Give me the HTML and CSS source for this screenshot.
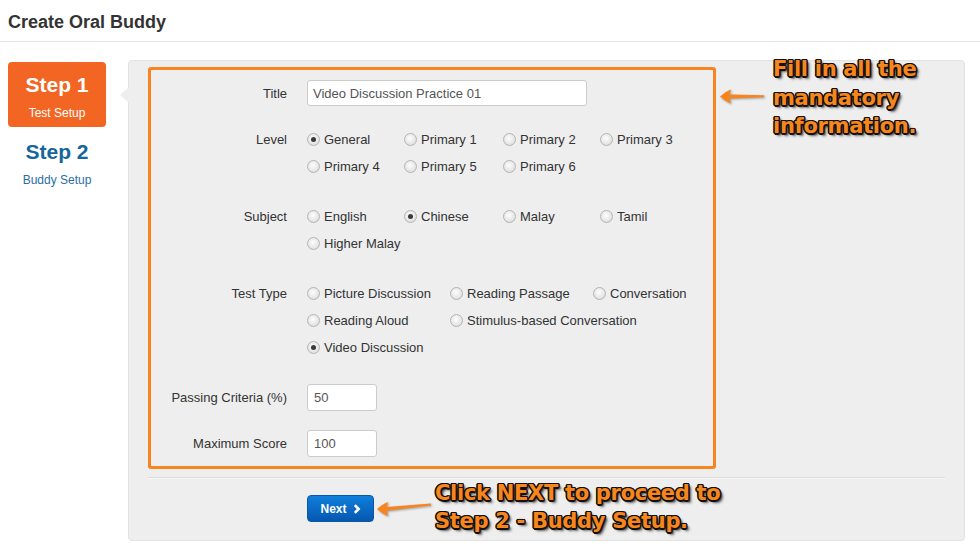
FILE: index.html
```html
<!DOCTYPE html>
<html>
<head>
<meta charset="utf-8">
<link rel="stylesheet" href="styles.css">
</head>
<body>
<div class="header"><h1 class="page-title">Create Oral Buddy</h1></div>
<div class="main">
  <div class="steps">
    <div class="step active"><div class="step-num">Step 1</div><div class="step-name">Test Setup</div></div>
    <div class="step"><div class="step-num">Step 2</div><div class="step-name">Buddy Setup</div></div>
  </div>
  <div class="panel">
    <div class="highlight">
      <div class="row row-title">
        <div class="label">Title</div>
        <div class="input wide">Video Discussion Practice 01</div>
      </div>
      <div class="row group g-level">
        <div class="label lbl-line">Level</div>
        <div class="options cols4">
          <div class="opt"><span class="radio checked"></span>General</div>
          <div class="opt"><span class="radio"></span>Primary 1</div>
          <div class="opt"><span class="radio"></span>Primary 2</div>
          <div class="opt"><span class="radio"></span>Primary 3</div>
          <div class="opt"><span class="radio"></span>Primary 4</div>
          <div class="opt"><span class="radio"></span>Primary 5</div>
          <div class="opt"><span class="radio"></span>Primary 6</div>
        </div>
      </div>
      <div class="row group g-subject">
        <div class="label lbl-line">Subject</div>
        <div class="options cols4">
          <div class="opt"><span class="radio"></span>English</div>
          <div class="opt"><span class="radio checked"></span>Chinese</div>
          <div class="opt"><span class="radio"></span>Malay</div>
          <div class="opt"><span class="radio"></span>Tamil</div>
          <div class="opt"><span class="radio"></span>Higher Malay</div>
        </div>
      </div>
      <div class="row group g-type">
        <div class="label lbl-line">Test Type</div>
        <div class="options cols3">
          <div class="opt"><span class="radio"></span>Picture Discussion</div>
          <div class="opt"><span class="radio"></span>Reading Passage</div>
          <div class="opt"><span class="radio"></span>Conversation</div>
          <div class="opt"><span class="radio"></span>Reading Aloud</div>
          <div class="opt span2"><span class="radio"></span>Stimulus-based Conversation</div>
          <div class="opt"><span class="radio checked"></span>Video Discussion</div>
        </div>
      </div>
      <div class="row row-pass">
        <div class="label">Passing Criteria (%)</div>
        <div class="input small">50</div>
      </div>
      <div class="row row-max">
        <div class="label">Maximum Score</div>
        <div class="input small">100</div>
      </div>
    </div>
    <div class="actions">
      <div class="btn">Next <svg class="chev" width="8" height="10" viewBox="0 0 8 10"><path d="M1.8 1.2 L5.6 5 L1.8 8.8" fill="none" stroke="#fff" stroke-width="2.6"/></svg></div>
    </div>
  </div>
</div>

<div class="note note-fill">Fill in all the<br>mandatory<br>information.</div>
<div class="note note-next">Click NEXT to proceed to<br>Step 2 - Buddy Setup.</div>

<svg class="arrow arrow-1" width="50" height="20" viewBox="0 0 50 20">
  <path d="M2 9.5 C6 6 9 4 13 2.5 L11.5 7.6 L46 8.2 L46 10.2 L11.5 11.6 L13 16.5 C9 15 6 13 2 9.5 Z" fill="#f7841f"/>
</svg>
<svg class="arrow arrow-2" width="60" height="22" viewBox="0 0 60 22">
  <path d="M2 12 C6 8.5 9 6.5 13 5 L11.8 10 L56 6.6 L56 8.6 L11.8 13.8 L13 19 C9 17.5 6 15.5 2 12 Z" fill="#f7841f"/>
</svg>
</body>
</html>
```

FILE: styles.css
```css
html, body {
  margin: 0;
  padding: 0;
  background: #fff;
}
body {
  font-family: "Liberation Sans", Arial, sans-serif;
  color: #333;
  width: 980px;
  height: 557px;
  overflow: hidden;
  position: relative;
}
.header {
  height: 42px;
  box-sizing: border-box;
  border-bottom: 1px solid #e6e6e6;
  padding: 3px 8px 0;
  display: flex;
  align-items: center;
}
.page-title {
  margin: 0;
  font-size: 18px;
  font-weight: bold;
  color: #333;
}
.main {
  display: flex;
  gap: 22px;
  padding: 18px 15px 0 8px;
}
.steps {
  width: 98px;
  margin-top: 2px;
  display: flex;
  flex-direction: column;
  gap: 9px;
}
.step {
  text-align: center;
  color: #17659b;
}
.step.active {
  background: #f26522;
  color: #fff;
  border-radius: 4px;
  height: 65px;
  box-sizing: border-box;
  padding-top: 10px;
}
.step-num {
  font-size: 21px;
  font-weight: bold;
  line-height: 26px;
}
.step-name {
  font-size: 12px;
  line-height: 16px;
  margin-top: 7px;
}
.step:not(.active) .step-num { line-height: 30px; margin-top: 1px; }
.step:not(.active) .step-name { color: #2b6ea3; margin-top: 5px; }

.panel {
  flex: 1;
  position: relative;
  background: #eeeeee;
  border: 1px solid #e2e2e2;
  border-radius: 4px;
  padding: 6px 19px 0;
}
.panel::before {
  content: "";
  position: absolute;
  left: -9px;
  top: 26px;
  width: 0;
  height: 0;
  border-top: 8px solid transparent;
  border-bottom: 8px solid transparent;
  border-right: 9px solid #eeeeee;
}
.highlight {
  width: 568px;
  box-sizing: border-box;
  border: 3px solid #f7841f;
  border-radius: 3px;
  padding: 10px 0 9px;
}
.row {
  display: flex;
  align-items: center;
  font-size: 13px;
}
.group { align-items: flex-start; }
.label {
  width: 136px;
  margin-right: 20px;
  text-align: right;
  color: #333;
  flex: none;
}
.lbl-line { line-height: 27px; }
.input {
  background: #fff;
  border: 1px solid #cccccc;
  border-radius: 3px;
  box-sizing: border-box;
  color: #555;
  font-size: 13px;
  padding-left: 5px;
  display: flex;
  align-items: center;
}
.input.wide { width: 280px; height: 26px; }
.input.small { width: 70px; height: 27px; padding-left: 6px; }
.g-level { margin-top: 19.5px; }
.g-subject { margin-top: 23px; }
.g-type { margin-top: 23px; }
.row-pass { margin-top: 23.5px; }
.row-max { margin-top: 19px; }
.options {
  display: grid;
  grid-auto-rows: 27px;
}
.cols4 { grid-template-columns: 97px 99px 97px 97px; }
.cols3 { grid-template-columns: 143px 143px 143px; }
.opt {
  display: flex;
  align-items: center;
  color: #333;
  white-space: nowrap;
}
.span2 { grid-column: span 2; }
.radio {
  width: 11px;
  height: 11px;
  border: 1px solid #b4b4b4;
  border-radius: 50%;
  background: radial-gradient(circle at 45% 40%, #fdfdfd 0%, #e6e6e6 60%, #d2d2d2 100%);
  margin-right: 4px;
  position: relative;
  flex: none;
}
.radio.checked::after {
  content: "";
  position: absolute;
  left: 3px;
  top: 3px;
  width: 5px;
  height: 5px;
  border-radius: 50%;
  background: #3a3a3a;
}
.actions {
  margin-top: 8px;
  border-top: 1px solid #dcdcdc;
  box-shadow: inset 0 1px 0 #f8f8f8;
  padding: 17px 0 18px 159px;
}
.btn {
  width: 67px;
  height: 27px;
  box-sizing: border-box;
  border-radius: 4px;
  background: linear-gradient(#0f7fdc, #0657b0);
  border: 1px solid #0a56a8;
  color: #fff;
  font-size: 12px;
  font-weight: bold;
  display: flex;
  align-items: center;
  justify-content: center;
  gap: 6px;
}
.chev { display: block; }

.note {
  position: absolute;
  font-family: "DejaVu Sans", Verdana, sans-serif;
  font-weight: bold;
  font-size: 21px;
  color: #f7861c;
  letter-spacing: -0.3px;
  text-shadow:
    -1px -1px 0 #111, 1px -1px 0 #111, -1px 1px 0 #111, 1px 1px 0 #111,
    0 -1.5px 0 #111, 0 1.5px 0 #111, -1.5px 0 0 #111, 1.5px 0 0 #111,
    2px 2px 2px rgba(0,0,0,0.75), 3px 3px 3px rgba(0,0,0,0.45);
  white-space: nowrap;
}
.note-fill {
  left: 773px;
  top: 55px;
  line-height: 28.5px;
}
.note-next {
  left: 435px;
  top: 480px;
  line-height: 27.5px;
}
.arrow {
  position: absolute;
  filter: drop-shadow(1px 1px 1px rgba(0,0,0,0.35));
}
.arrow-1 { left: 718px; top: 87px; }
.arrow-2 { left: 375px; top: 497px; }
```
